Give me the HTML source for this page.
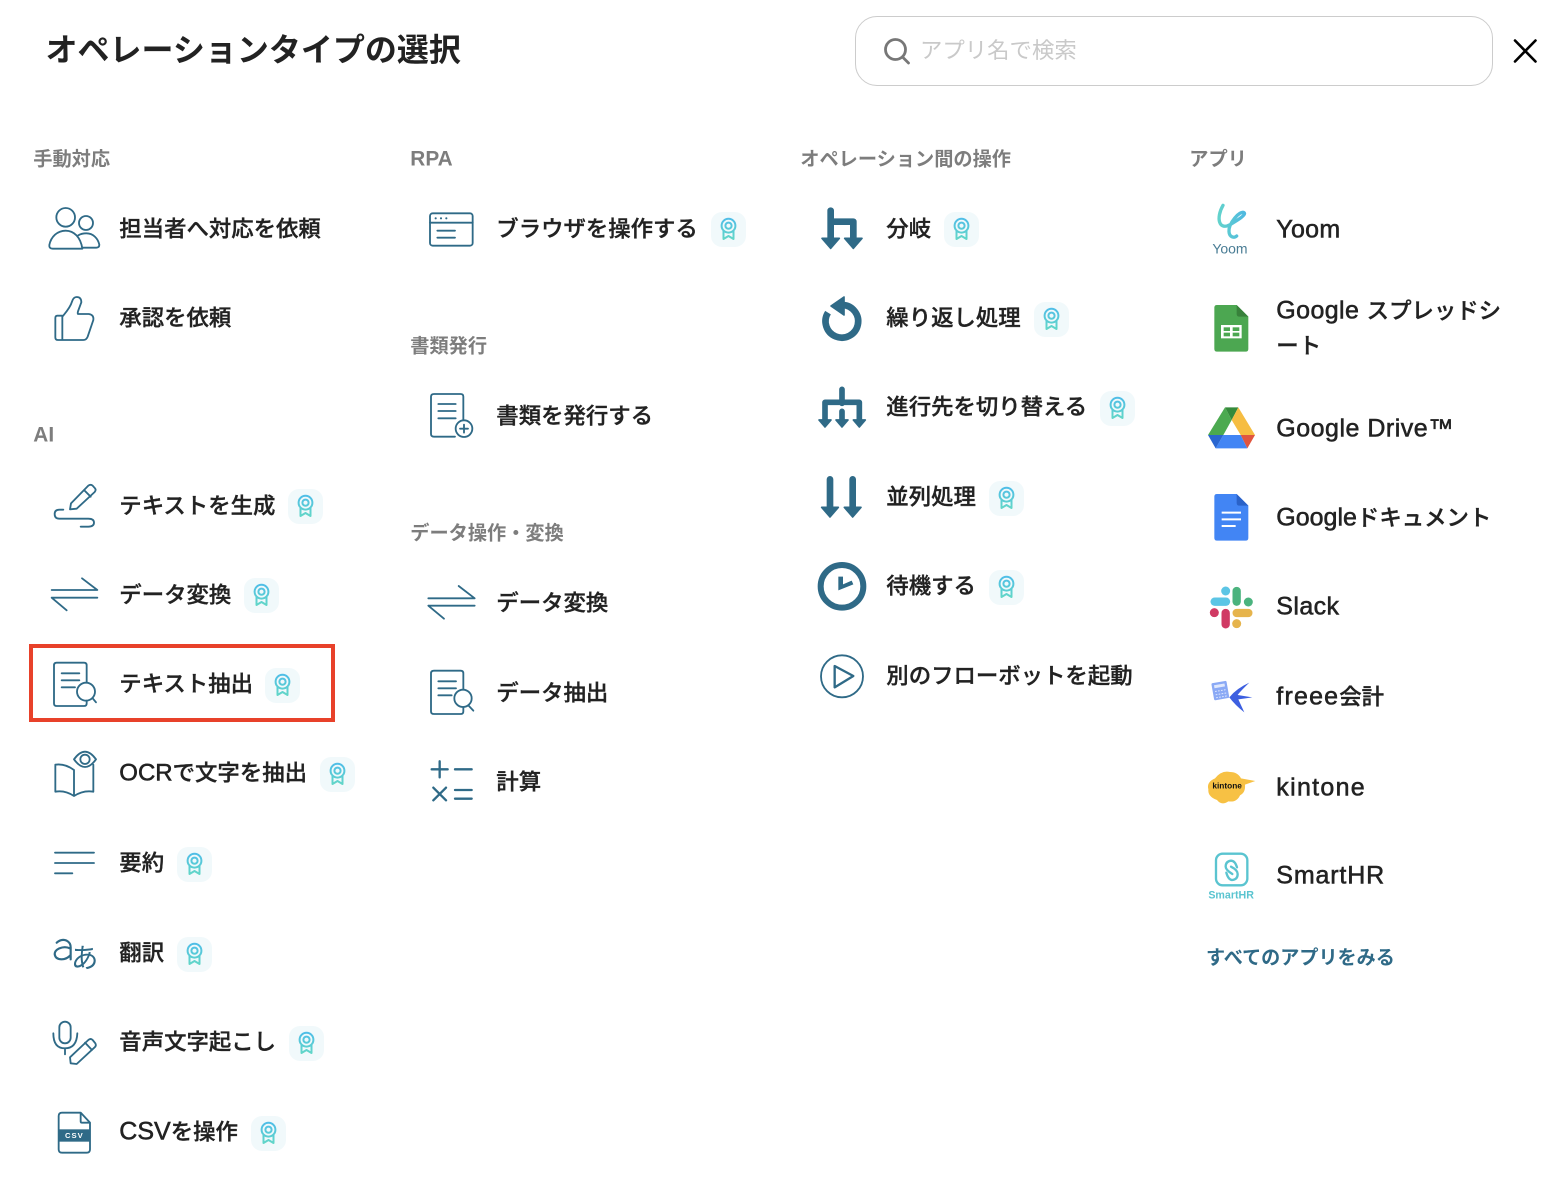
<!DOCTYPE html>
<html lang="ja">
<head>
<meta charset="utf-8">
<title>オペレーションタイプの選択</title>
<style>
html,body{margin:0;padding:0;background:#fff}
body{position:relative;width:1568px;height:1182px;overflow:hidden;font-family:"Liberation Sans","Noto Sans CJK JP",sans-serif;color:#222}
.t{position:absolute;font-size:22.4px;line-height:30px;height:30px;white-space:nowrap;font-weight:500;-webkit-text-stroke:.35px #222;transform:translate(-.7px,1.5px)}
.t span{font-size:25px;-webkit-text-stroke:.55px #222}
.t.x{transform:translate(-.7px,.5px)}
.s{position:absolute;font-size:19.2px;line-height:26px;height:26px;white-space:nowrap;font-weight:700;color:#7d7d7d;transform:translate(-.7px,1.5px)}
.s span{font-size:20.8px}
.s.x{transform:translate(-.7px,.5px)}
.b{position:absolute;width:35px;height:35px;border-radius:11px;background:#f1f9fb}
.b svg{display:block}
#title{position:absolute;left:45.5px;top:28px;font-size:32px;line-height:44px;font-weight:700;white-space:nowrap}
#search{position:absolute;left:855px;top:16px;width:636px;height:68px;border:1px solid #ccc;border-radius:22px;background:#fff}
#ph{position:absolute;left:920px;top:36px;font-size:22.4px;line-height:30px;color:#c9c9c9;white-space:nowrap}
#red{position:absolute;left:29px;top:644px;width:298px;height:70px;border:4px solid #e8412a}
#more{position:absolute;left:1206px;top:946px;font-size:19.1px;line-height:26px;font-weight:700;color:#2f6a87;white-space:nowrap}
#ic{position:absolute;left:0;top:0}
#ic .l{fill:none;stroke:#2f6a87;stroke-width:5.5;stroke-linecap:round;stroke-linejoin:round}
#ic .h{fill:none;stroke:#2f6a87;stroke-linecap:round;stroke-linejoin:round}
#ic .f{fill:#2f6a87;stroke:#2f6a87;stroke-width:5;stroke-linejoin:round}
</style>
</head>
<body>
<div id="title">オペレーションタイプの選択</div>
<div id="search"></div>
<div id="ph">アプリ名で検索</div>

<div class="s" style="left:34px;top:146px">手動対応</div>
<div class="s x" style="left:34px;top:422px"><span>AI</span></div>
<div class="s x" style="left:411px;top:146px"><span>RPA</span></div>
<div class="s" style="left:411px;top:333px">書類発行</div>
<div class="s" style="left:411px;top:520px">データ操作・変換</div>
<div class="s" style="left:801px;top:146px">オペレーション間の操作</div>
<div class="s" style="left:1190px;top:146px">アプリ</div>

<div class="t" style="left:120px;top:213px">担当者へ対応を依頼</div>
<div class="t" style="left:120px;top:302px">承認を依頼</div>
<div class="t" style="left:120px;top:490px">テキストを生成</div>
<div class="t" style="left:120px;top:579px">データ変換</div>
<div class="t" style="left:120px;top:668px">テキスト抽出</div>
<div class="t x" style="left:120px;top:758px"><span style="font-size:24px">OCR</span>で文字を抽出</div>
<div class="t" style="left:120px;top:847px">要約</div>
<div class="t" style="left:120px;top:937px">翻訳</div>
<div class="t" style="left:120px;top:1026px">音声文字起こし</div>
<div class="t x" style="left:120px;top:1116px"><span>CSV</span>を操作</div>

<div class="t" style="left:497px;top:213px">ブラウザを操作する</div>
<div class="t" style="left:497px;top:400px">書類を発行する</div>
<div class="t" style="left:497px;top:587px">データ変換</div>
<div class="t" style="left:497px;top:677px">データ抽出</div>
<div class="t" style="left:497px;top:766px">計算</div>

<div class="t" style="left:887px;top:213px">分岐</div>
<div class="t" style="left:887px;top:302px">繰り返し処理</div>
<div class="t" style="left:887px;top:391px">進行先を切り替える</div>
<div class="t" style="left:887px;top:481px">並列処理</div>
<div class="t" style="left:887px;top:570px">待機する</div>
<div class="t" style="left:887px;top:660px">別のフローボットを起動</div>

<div class="t x" style="left:1277px;top:214px"><span style="letter-spacing:.3px">Yoom</span></div>
<div class="t x" style="left:1277px;top:295px"><span style="letter-spacing:.4px">Google </span>スプレッドシ</div>
<div class="t" style="left:1277px;top:330px">ート</div>
<div class="t x" style="left:1277px;top:413px"><span style="letter-spacing:.5px">Google Drive™</span></div>
<div class="t x" style="left:1277px;top:502px"><span>Google</span>ドキュメント</div>
<div class="t x" style="left:1277px;top:591px"><span style="letter-spacing:.4px">Slack</span></div>
<div class="t x" style="left:1277px;top:681px"><span style="letter-spacing:1.2px">freee</span>会計</div>
<div class="t x" style="left:1277px;top:772px"><span style="letter-spacing:1.3px">kintone</span></div>
<div class="t x" style="left:1277px;top:860px"><span style="letter-spacing:.85px">SmartHR</span></div>
<div id="more">すべてのアプリをみる</div>

<div id="red"></div>

<svg width="0" height="0" style="position:absolute">
<defs>
<linearGradient id="mg" gradientUnits="userSpaceOnUse" x1="0" y1="6" x2="0" y2="27"><stop offset="0" stop-color="#4fbde8"/><stop offset="1" stop-color="#62d6c8"/></linearGradient>
<linearGradient id="yg" x1="0" y1="0" x2="1" y2="0"><stop offset="0" stop-color="#62d2cc"/><stop offset="1" stop-color="#4fb9e0"/></linearGradient>
<symbol id="m" viewBox="0 0 35 35">
<g fill="none" stroke="url(#mg)" stroke-width="2" stroke-linejoin="round">
<path d="M12.5 19 V27 L17.5 24 L22.5 27 V19"/>
<circle cx="17.5" cy="13.7" r="6.9" fill="#f1f9fb"/>
<circle cx="17.5" cy="13.7" r="3.1"/>
</g>
</symbol>
</defs>
</svg>

<div class="b" style="left:288px;top:489px"><svg width="35" height="35"><use href="#m"/></svg></div>
<div class="b" style="left:244px;top:578px"><svg width="35" height="35"><use href="#m"/></svg></div>
<div class="b" style="left:265px;top:668px"><svg width="35" height="35"><use href="#m"/></svg></div>
<div class="b" style="left:320px;top:757px"><svg width="35" height="35"><use href="#m"/></svg></div>
<div class="b" style="left:177px;top:847px"><svg width="35" height="35"><use href="#m"/></svg></div>
<div class="b" style="left:177px;top:937px"><svg width="35" height="35"><use href="#m"/></svg></div>
<div class="b" style="left:289px;top:1026px"><svg width="35" height="35"><use href="#m"/></svg></div>
<div class="b" style="left:251px;top:1116px"><svg width="35" height="35"><use href="#m"/></svg></div>
<div class="b" style="left:711px;top:212px"><svg width="35" height="35"><use href="#m"/></svg></div>
<div class="b" style="left:944px;top:212px"><svg width="35" height="35"><use href="#m"/></svg></div>
<div class="b" style="left:1034px;top:302px"><svg width="35" height="35"><use href="#m"/></svg></div>
<div class="b" style="left:1100px;top:391px"><svg width="35" height="35"><use href="#m"/></svg></div>
<div class="b" style="left:989px;top:481px"><svg width="35" height="35"><use href="#m"/></svg></div>
<div class="b" style="left:989px;top:570px"><svg width="35" height="35"><use href="#m"/></svg></div>

<svg id="ic" width="1568" height="1182" viewBox="0 0 1568 1182">
<!-- header -->
<circle cx="895.5" cy="49.5" r="10" fill="none" stroke="#777" stroke-width="2.8"/>
<path d="M903 57.5 L908.5 63" stroke="#777" stroke-width="2.8" stroke-linecap="round"/>
<path d="M1515 40.5 L1535.5 61.5 M1535.5 40.5 L1515 61.5" stroke="#000" stroke-width="2.6" stroke-linecap="round"/>

<!-- zoom 1 -->
<g transform="translate(20,140) scale(.33333)">
<circle class="l" cx="137" cy="232" r="28"/>
<circle class="l" cx="198" cy="249" r="21"/>
<path class="l" d="M98 326 Q87 326 88 315 C93 290 112 272 137 272 C162 272 182 292 187 326 Z"/>
<path class="l" d="M175 286 C183 281 190 280 199 280 C220 280 234 296 238 314 Q238 323 229 323 H187"/>
<path class="l" d="M127 527 H112 Q106 527 106 534 V592 Q106 600 114 600 H190 Q199 600 203 590 L220 540 Q222 524 206 522 H175 Q172 522 174 514 L184 487 Q184 471 170 471 Q160 471 156 485 C150 505 135 520 127 530 V600"/>
</g>

<!-- zoom 2 -->
<g transform="translate(20,470) scale(.33333)">
<path class="l" d="M150 118 L153 100 L205 47 Q212 42 218 47 L225 55 Q229 60 224 66 L170 116 Z M192 60 L212 80"/>
<path class="l" d="M130 119 H118 Q104 119 104 132 Q104 146 118 146 H205 Q222 146 222 158 Q222 170 205 170 H182"/>
<path class="l" d="M95 360 H232 L186 325 M95 383 H232 M95 383 L140 421"/>
<path class="l" d="M172 708 H110 Q102 708 102 700 V586 Q102 578 110 578 H192 Q200 578 200 586 V636 M200 692 V700 Q200 708 192 708 H172"/>
<path class="l" d="M125 610 H178 M125 631 H178 M125 652 H165"/>
<circle class="l" cx="198" cy="665" r="27"/>
<path class="l" d="M218 685 L228 697"/>
<path class="l" d="M162 868 Q195 822 228 868 Q195 914 162 868 Z"/>
<circle class="l" cx="195" cy="868" r="14"/>
<path class="l" d="M162 900 Q135 880 106 884 V965 Q135 960 162 978 Q190 960 220 965 V884 M162 900 V978"/>
</g>

<!-- zoom 3 -->
<g transform="translate(20,820) scale(.33333)">
<path class="l" d="M105 98 H222 M105 129 H222 M105 160 H157"/>
<path class="l" style="stroke-width:6.5" d="M110 368 Q125 355 140 362 Q152 368 152 382 V418 M150 385 Q135 378 118 385 Q104 392 104 402 Q106 418 125 418 Q140 418 152 405"/>
<text x="153" y="442" font-size="82" fill="#2f6a87" font-family="Noto Sans CJK JP, sans-serif">あ</text>
<rect class="l" x="118" y="605" width="34" height="65" rx="17"/>
<path class="l" d="M100 640 Q100 685 135 685 Q170 685 172 640 M135 685 V703"/>
<path class="l" d="M152 730 L150 712 L205 660 Q212 654 218 660 L226 670 Q230 676 224 682 L170 732 Z M195 668 L216 690"/>
<path class="l" d="M182 878 H126 Q116 878 116 888 V988 Q116 998 126 998 H200 Q210 998 210 988 V908 Z M182 878 V904 Q182 908 186 908 H210"/>
<rect x="116" y="928" width="94" height="37" fill="#2f6a87"/>
<text x="163" y="954" font-size="23" font-weight="700" fill="#fff" text-anchor="middle" letter-spacing="3" font-family="Liberation Sans, sans-serif">CSV</text>
</g>

<!-- zoom 4 -->
<g transform="translate(400,190) scale(.33333)">
<rect class="l" x="90" y="70" width="128" height="97" rx="8"/>
<path class="l" d="M90 98 H218"/>
<circle cx="107" cy="85" r="3.2" fill="#2f6a87"/><circle cx="123" cy="85" r="3.2" fill="#2f6a87"/><circle cx="139" cy="85" r="3.2" fill="#2f6a87"/>
<path class="l" d="M112 122 H165 M112 143 H165"/>
<path class="l" d="M165 740 H102 Q93 740 93 732 V620 Q93 612 102 612 H182 Q190 612 190 620 V690"/>
<path class="l" d="M115 642 H167 M115 663 H167 M115 685 H167"/>
<circle class="l" cx="192" cy="716" r="25"/>
<path class="l" d="M180 716 H204 M192 704 V728"/>
</g>

<!-- zoom 5 -->
<g transform="translate(400,560) scale(.33333)">
<path class="l" d="M85 115 H224 L176 78 M85 137 H224 M85 137 L132 176"/>
<path class="l" d="M165 462 H102 Q93 462 93 454 V340 Q93 332 102 332 H182 Q190 332 190 340 V388 M190 442 V454 Q190 462 182 462 H165"/>
<path class="l" d="M115 364 H168 M115 385 H168 M115 406 H155"/>
<circle class="l" cx="189" cy="415" r="26"/>
<path class="l" d="M205 436 L220 452"/>
<path class="l" style="stroke-width:7" d="M95 628 H143 M119 604 V652 M165 628 H215 M100 683 L138 721 M138 683 L100 721 M165 690 H215 M165 716 H215"/>
</g>

<!-- zoom 6 -->
<g transform="translate(800,190) scale(.33333)">
<path class="h" stroke-width="20" d="M92 62 V150 M92 95 H160 V150"/>
<path class="f" d="M66 145 H118 L92 175 Z M134 145 H186 L160 175 Z"/>
<path class="h" style="stroke-linecap:butt" stroke-width="20" d="M128 345 A49 49 0 1 1 84 368"/>
<path class="f" d="M132 321 V375 L93 348 Z"/>
<path class="h" stroke-width="17" d="M126 598 V640 M75 690 V637 H178 V690 M126 664 V690"/>
<path class="f" d="M57 690 H93 L75 711 Z M108 690 H144 L126 711 Z M160 690 H196 L178 711 Z"/>
</g>

<!-- zoom 7 -->
<g transform="translate(800,450) scale(.33333)">
<path class="h" stroke-width="20" d="M90 88 V172 M158 88 V172"/>
<path class="f" d="M65 172 H115 L90 201 Z M133 172 H183 L158 201 Z"/>
<circle cx="126" cy="409" r="64" fill="none" stroke="#2f6a87" stroke-width="18"/>
<path fill="#2f6a87" d="M115 380 H129 V403 L155 392 L160 403 L115 421 Z"/>
<circle cx="126" cy="679" r="63" fill="none" stroke="#2f6a87" stroke-width="5.5"/>
<path class="l" style="stroke-width:7" d="M104 648 L160 678 L104 712 Z"/>
</g>

<!-- zoom 8 -->
<g transform="translate(1195,190) scale(.33333)">
<path fill="none" stroke="url(#yg)" stroke-width="10" stroke-linecap="round" stroke-linejoin="round" d="M84 46 C62 85 72 122 105 104 C125 92 155 75 147 68 C135 60 100 100 102 125 C103 142 118 145 125 138"/>
<text x="52" y="190" font-size="42" fill="#4a7d95" font-family="Liberation Sans, sans-serif">Yoom</text>
<path fill="#4ca751" d="M66 345 H125 L160 380 V477 Q160 485 152 485 H66 Q58 485 58 477 V353 Q58 345 66 345Z"/>
<path fill="#38813b" d="M125 345 V372 Q125 380 133 380 H160 Z"/>
<rect x="78" y="405" width="62" height="40" fill="#fff"/>
<rect x="86" y="412" width="19" height="11" fill="#4ca751"/><rect x="113" y="412" width="20" height="11" fill="#4ca751"/>
<rect x="86" y="428" width="19" height="11" fill="#4ca751"/><rect x="113" y="428" width="20" height="11" fill="#4ca751"/>
<path fill="#4caa50" d="M90 652 L110 690 L85 735 H39 Z"/>
<path fill="#358a3b" d="M90 652 H130 L110 690 Z"/>
<path fill="#f6bd42" d="M130 652 L180 735 H137 L110 690 Z"/>
<path fill="#e0553f" d="M137 735 H180 L157 775 Z"/>
<path fill="#4285f4" d="M85 735 H137 L157 775 H62 Z"/>
<path fill="#2a66d0" d="M39 735 H85 L62 775 Z"/>
</g>

<!-- zoom 9 -->
<g transform="translate(1195,480) scale(.33333)">
<path fill="#4285f4" d="M66 42 H125 L160 77 V174 Q160 182 152 182 H66 Q58 182 58 174 V50 Q58 42 66 42Z"/>
<path fill="#2a62c8" d="M125 42 V69 Q125 77 133 77 H160 Z"/>
<path d="M80 98 H138 M80 118 H138 M80 138 H122" stroke="#fff" stroke-width="6" fill="none"/>
<g stroke-linecap="round" fill="none">
<path stroke="#5cc5e5" stroke-width="25" d="M59 365 H93"/><circle cx="92" cy="333" r="13.5" fill="#5cc5e5"/>
<path stroke="#4bb37e" stroke-width="25" d="M125 333 V365"/><circle cx="160" cy="366" r="13.5" fill="#4bb37e"/>
<path stroke="#e6b44c" stroke-width="25" d="M125 399 H160"/><circle cx="125" cy="431" r="13.5" fill="#e6b44c"/>
<path stroke="#d03a64" stroke-width="25" d="M92 399 V433"/><circle cx="58" cy="398" r="13.5" fill="#d03a64"/>
</g>
<g transform="rotate(-10 75 632)">
<rect x="53" y="606" width="46" height="52" rx="4" fill="#8aa9f5"/>
<rect x="60" y="613" width="32" height="9" fill="#dfe8fd"/>
<path d="M60 632 H92 M60 642 H92 M60 651 H92" stroke="#dfe8fd" stroke-width="3" stroke-dasharray="5 4"/>
</g>
<path fill="#3d5fe0" d="M163 608 Q135 635 128 645 L172 652 L130 658 L148 697 Q120 675 103 652 Q125 625 163 608 Z"/>
</g>

<!-- zoom 10 -->
<g transform="translate(1195,760) scale(.33333)">
<path fill="#f7c144" d="M60 55 Q80 30 105 36 Q128 36 138 55 L181 63 L150 74 Q152 98 135 106 Q125 128 100 124 Q80 138 66 120 Q38 110 40 88 Q34 66 60 55 Z"/>
<text x="52" y="86" font-size="25" font-weight="700" fill="#111" font-family="Liberation Sans, sans-serif">kintone</text>
<rect x="63" y="281" width="94" height="95" rx="20" fill="none" stroke="#5ac4d0" stroke-width="7"/>
<path fill="none" stroke="#5ac4d0" stroke-width="7" stroke-linecap="round" d="M126 322 Q120 302 108 302 Q92 304 92 320 Q92 330 112 342 M94 338 Q100 360 112 360 Q128 358 128 342 Q128 330 108 320"/>
<text x="40" y="415" font-size="32" font-weight="700" fill="#5ac4d0" font-family="Liberation Sans, sans-serif">SmartHR</text>
</g>
</svg>
</body>
</html>
